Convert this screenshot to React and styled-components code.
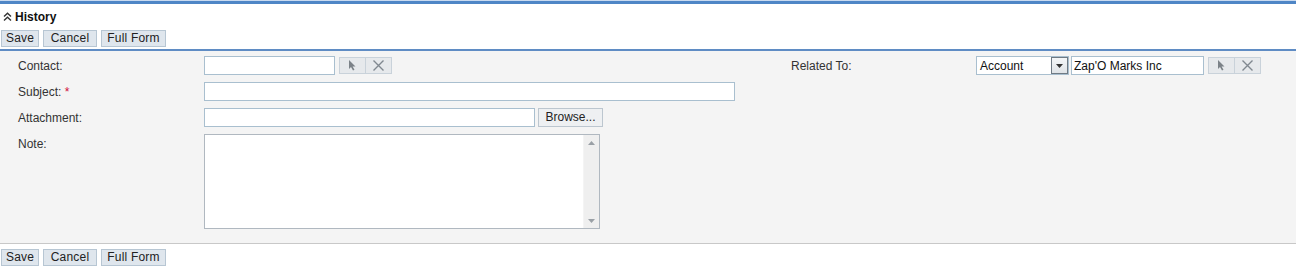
import React from "react";
import styled, { createGlobalStyle } from "styled-components";

const Global = createGlobalStyle`
  html, body { margin: 0; padding: 0; background: #fff; }
  body { font-family: Arial, "Liberation Sans", sans-serif; font-size: 12px; color: #222; }
`;

const Page = styled.div`
  width: 1296px;
  height: 276px;
  background: #fff;
  border-top: 1px solid #c9daf0;
  box-sizing: border-box;
`;

const TopBar = styled.div`
  height: 3px;
  background: #4f86c6;
`;

const Header = styled.div`
  display: flex;
  align-items: center;
  gap: 3px;
  height: 26px;
  padding-left: 3px;
  font-weight: bold;
  font-size: 12px;
  color: #111;
`;

const Toolbar = styled.div`
  display: flex;
  gap: 4px;
  padding: 0 0 0 1px;
  height: 19px;
  align-items: flex-start;
`;

const Btn = styled.button`
  font-family: Arial, "Liberation Sans", sans-serif;
  font-size: 12px;
  color: #222;
  height: 17px;
  width: ${p => (p.$w ? `${p.$w}px` : "auto")};
  padding: 0;
  background: #dfe6ed;
  border: 1px solid #b7c6d3;
  border-radius: 0;
  line-height: 15px;
  margin: 0;
  text-align: center;
  letter-spacing: 0.2px;
`;

const BlueLine = styled.div`
  height: 2px;
  background: #5f8cc4;
`;

const Form = styled.div`
  background: #f4f4f4;
  padding: 5px 0 14px 18px;
  border-bottom: 1px solid #c8c8c8;
  display: flex;
  flex-direction: column;
  gap: 7px;
`;

const Row = styled.div`
  display: flex;
  align-items: flex-start;
  height: ${p => p.$h || 19}px;
`;

const Label = styled.div`
  width: ${p => p.$w || 186}px;
  padding-top: 3px;
  color: #333;
  font-size: 12px;
  flex-shrink: 0;
`;

const Star = styled.span`
  color: #d0103a;
`;

const Left = styled.div`
  width: 587px;
  display: flex;
  align-items: flex-start;
  flex-shrink: 0;
`;

const Input = styled.div`
  width: ${p => p.$w}px;
  height: 19px;
  box-sizing: border-box;
  background: #fff;
  border: 1px solid #a9bfcf;
  font-size: 12px;
  color: #111;
  padding: 2px 0 0 2px;
  margin-left: ${p => p.$ml || 0}px;
  white-space: nowrap;
  overflow: hidden;
`;

const IconGroup = styled.div`
  display: flex;
  margin-left: ${p => p.$ml || 4}px;
  margin-top: 1px;
`;

const IconBtn = styled.div`
  width: 27px;
  height: 17px;
  box-sizing: border-box;
  background: #e6e9ec;
  border: 1px solid #c9d2da;
  margin-left: ${p => (p.$first ? 0 : -1)}px;
  display: flex;
  align-items: center;
  justify-content: center;
`;

const BrowseBtn = styled(Btn)`
  height: 19px;
  margin-left: 3px;
  background: #eef0f2;
  border-color: #bcc6cf;
  letter-spacing: 0;
`;

const TextArea = styled.div`
  width: 396px;
  height: 95px;
  box-sizing: border-box;
  background: #fff;
  border: 1px solid #b0b8c0;
  display: flex;
  justify-content: flex-end;
`;

const Scroll = styled.div`
  width: 16px;
  background: #efefef;
  border-left: 1px solid #f4f4f4;
  display: flex;
  flex-direction: column;
  justify-content: space-between;
  align-items: center;
  padding: 6px 0 5px;
  box-sizing: border-box;
`;

const Select = styled.div`
  width: 93px;
  height: 19px;
  box-sizing: border-box;
  background: #fff;
  border: 1px solid #a9bfcf;
  display: flex;
  align-items: stretch;
  font-size: 12px;
  color: #111;
`;

const SelText = styled.div`
  flex: 1;
  padding: 2px 0 0 3px;
`;

const SelBtn = styled.div`
  width: 17px;
  box-sizing: border-box;
  border: 1px solid #6f7a84;
  background: linear-gradient(#f4f6f8, #dfe3e7);
  display: flex;
  align-items: center;
  justify-content: center;
`;

const BottomBar = styled.div`
  padding-top: 5px;
`;

const Pointer = () => (
  <svg width="9" height="11" viewBox="0 0 9 11">
    <path d="M1 0 L1 9 L3 7 L5 10.5 L6.5 9.8 L4.6 6.5 L7.5 6.5 Z" fill="#7b8288" />
  </svg>
);

const Cross = () => (
  <svg width="13" height="13" viewBox="0 0 13 13">
    <path d="M1.5 1.5 L11.5 11.5 M11.5 1.5 L1.5 11.5" stroke="#808890" strokeWidth="1.4" />
  </svg>
);

const Chevrons = () => (
  <svg width="9" height="10" viewBox="0 0 9 10">
    <path d="M1 4.5 L4.5 1.2 L8 4.5 M1 8.5 L4.5 5.2 L8 8.5" stroke="#333" strokeWidth="1.4" fill="none" />
  </svg>
);

const Tri = ({ up, color = "#9aa0a6" }) => (
  <svg width="7" height="4" viewBox="0 0 7 4">
    <path d={up ? "M0 4 L3.5 0 L7 4 Z" : "M0 0 L7 0 L3.5 4 Z"} fill={color} />
  </svg>
);

const PickClear = ({ ml }) => (
  <IconGroup $ml={ml}>
    <IconBtn $first><Pointer /></IconBtn>
    <IconBtn><Cross /></IconBtn>
  </IconGroup>
);

const Buttons = () => (
  <>
    <Btn $w={38}>Save</Btn>
    <Btn $w={54}>Cancel</Btn>
    <Btn $w={65}>Full Form</Btn>
  </>
);

export default function App() {
  return (
    <Page>
      <Global />
      <TopBar />
      <Header>
        <Chevrons />
        <span>History</span>
      </Header>
      <Toolbar>
        <Buttons />
      </Toolbar>
      <BlueLine />
      <Form>
        <Row>
          <Label>Contact:</Label>
          <Left>
            <Input $w={131} />
            <PickClear ml={4} />
          </Left>
          <Label $w={185}>Related To:</Label>
          <Select>
            <SelText>Account</SelText>
            <SelBtn><Tri color="#333" /></SelBtn>
          </Select>
          <Input $w={133} $ml={2}>Zap'O Marks Inc</Input>
          <PickClear ml={4} />
        </Row>
        <Row>
          <Label>Subject: <Star>*</Star></Label>
          <Input $w={531} />
        </Row>
        <Row>
          <Label>Attachment:</Label>
          <Input $w={331} />
          <BrowseBtn $w={65}>Browse...</BrowseBtn>
        </Row>
        <Row $h={95}>
          <Label>Note:</Label>
          <TextArea>
            <Scroll>
              <Tri up />
              <Tri />
            </Scroll>
          </TextArea>
        </Row>
      </Form>
      <BottomBar>
        <Toolbar>
          <Buttons />
        </Toolbar>
      </BottomBar>
    </Page>
  );
}
